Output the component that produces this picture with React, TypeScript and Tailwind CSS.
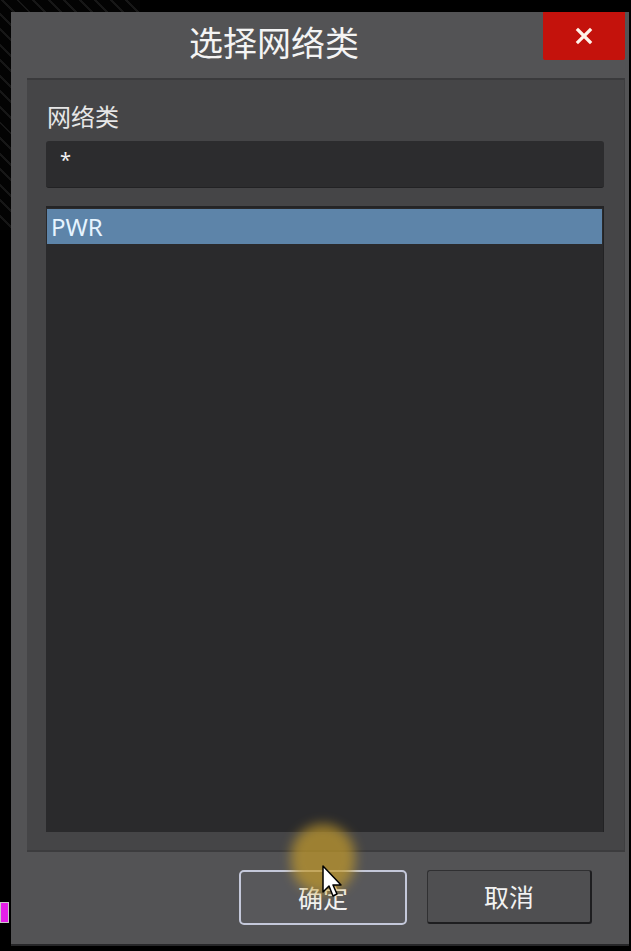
import React from "react";

const cjk = { fontFamily: '"Noto Sans CJK SC", "Noto Sans", sans-serif' };
const latin = { fontFamily: '"Noto Sans", "Noto Sans CJK SC", sans-serif' };

const SelectNetClassDialog = () => {
  return (
    <div className="relative w-[631px] h-[951px] bg-black overflow-hidden" style={cjk}>
      {/* hatched backdrop behind the dialog */}
      <div className="absolute left-0 top-0 w-[140px] h-[230px] bg-[repeating-linear-gradient(45deg,#050505_0px,#050505_9px,#262626_9px,#262626_11px)] opacity-60" />

      {/* Dialog */}
      <div className="relative ml-[11px] mt-[12px] w-[618px] h-[934px] bg-[#535355] flex flex-col">
        {/* Title bar */}
        <div className="flex h-[66px] shrink-0">
          <div className="pl-[178px] pt-[6px] text-[34px] leading-[48px] text-[#f4f4f4] font-normal">
            选择网络类
          </div>
          <div className="ml-auto mr-[4px] w-[82px] h-[48px] bg-[#c4120c] flex items-center justify-center rounded-b-[2px]">
            <svg width="18" height="18" viewBox="0 0 18 18">
              <path d="M3 3 L15 15 M15 3 L3 15" stroke="#fff3ea" strokeWidth="3.2" strokeLinecap="square" />
            </svg>
          </div>
        </div>

        {/* Content panel */}
        <div className="ml-[16px] mr-[4px] h-[774px] bg-[#454547] border-t-2 border-[#3a3a3c] border-b-2 border-b-[#3c3c3e] border-r border-r-[#3e3e40] flex flex-col pl-[19px] pr-[20px]">
          <div className="pt-[21px] pl-[1px] text-[24px] leading-[30px] text-[#e6e6e6]">网络类</div>
          <div className="mt-[10px] h-[47px] bg-[#2c2c2e] rounded-[3px] border-b border-[#222224] flex items-start pl-[14px] pt-[7px] text-[20px] leading-[24px] text-[#f0f0f0]" style={latin}>
            *
          </div>
          <div className="mt-[18px] h-[626px] bg-[#2a2a2c] border-t-2 border-[#242426] border-r border-r-[#222224] pt-[1px] px-[1px]">
            <div className="h-[35px] bg-[#5d84a9] flex items-center pl-[4px] text-[24px] text-[#e6f4ff]" style={latin}>
              PWR
            </div>
          </div>
        </div>

        {/* Buttons */}
        <div className="flex pt-[18px] pl-[228px] gap-[20px]">
          <button className="w-[168px] h-[55px] bg-[#58585b] border-2 border-[#c4c8da] rounded-[5px] text-[25px] text-[#f2f2f2]">
            确定
          </button>
          <button className="w-[165px] h-[54px] bg-[#4f4f51] border border-[#303032] border-r-2 border-b-2 border-r-[#1e1e20] border-b-[#1e1e20] rounded-[3px] text-[25px] text-[#f2f2f2]">
            取消
          </button>
        </div>
        <div className="mt-auto h-[2px] bg-[#262628]" />
      </div>

      {/* magenta marker at left edge */}
      <div className="absolute left-0 top-[902px] w-[9px] h-[21px] bg-[#e51ee8] border border-[#c9c9c9]" />

      {/* click highlight + cursor */}
      <div className="absolute left-[291px] top-[824px] w-[64px] h-[70px] rounded-full bg-[#c39a2a] opacity-70 blur-[6px]" />
      <svg className="absolute left-[322px] top-[865px]" width="22" height="34" viewBox="0 0 22 34">
        <path d="M1 1 L1 27 L7 21 L11 31 L15 29 L11 20 L19 20 Z" fill="#ffffff" stroke="#000000" strokeWidth="1.5" strokeLinejoin="round" />
      </svg>
    </div>
  );
};

export default function App() {
  return <SelectNetClassDialog />;
}
